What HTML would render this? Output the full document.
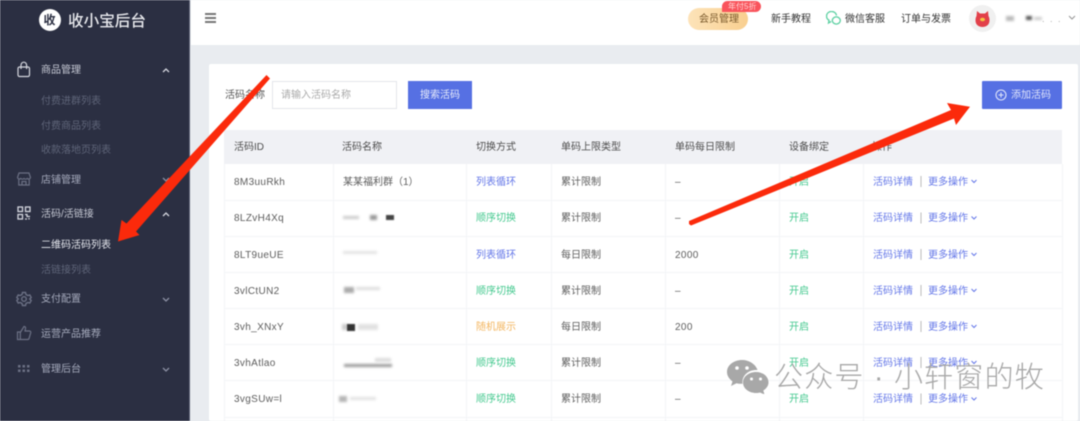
<!DOCTYPE html>
<html lang="zh"><head><meta charset="utf-8"><style>
*{box-sizing:border-box}
html,body{margin:0;width:1080px;height:421px;overflow:hidden;background:#e9ecf0}
body{position:relative;font:10px/14px "Liberation Sans","Noto Sans CJK SC",sans-serif;color:#555}
.a,.t,.r,svg{position:absolute}
.t{white-space:nowrap;margin-top:1px}
#blur{position:absolute;inset:0;filter:blur(.5px)}
.nav{color:#a6abbd;font-size:10px;left:41px}
.sub{color:#5f6579;font-size:10px;left:41px}
.hd{color:#333;font-size:10px}
.th{color:#4d4d4d;top:140px}
.b{color:#6477e8;margin-top:1.5px}.g{color:#45c98f;margin-top:1.5px}.o{color:#f3b660;margin-top:1.5px}
.c{color:#5d5d5d;margin-top:1.5px}
.id{letter-spacing:.35px}
.ln{position:absolute;top:164px;height:257px;width:1px;background:#f3f4f7}
.hl{position:absolute;left:224px;width:838px;height:1px;background:#f3f4f7}
.blot{position:absolute;background:#777;filter:blur(1.2px)}
</style></head><body>
<div id="blur">
<div class="a" style="left:0;top:0;width:190px;height:421px;background:#2b2f42;border-right:1px solid #555b70"></div>
<div class="a" style="left:191px;top:0;width:889px;height:45px;background:#fff"></div>
<div class="a" style="left:209px;top:64px;width:869px;height:357px;background:#fff;border-radius:2px"></div>

<div class="a" style="left:38.500px;top:8.500px;width:22px;height:22px;border-radius:50%;background:#fff"></div>
<div class="t" style="left:43.500px;top:11.500px;font-size:12px;font-weight:700;color:#2b2f42">收</div>
<div class="t" style="left:68px;top:9px;font-size:15.6px;line-height:24px;color:#e9eaee;font-weight:500">收小宝后台</div>

<svg style="left:16px;top:61px" width="16" height="18" viewBox="0 0 16 18" fill="none" stroke="#d4d6de" stroke-width="1.2"><rect x="2" y="6" width="11.500" height="9.500" rx="1.500"/><path d="M5 8V4a2.800 2.800 0 0 1 5.600 0v4"/></svg>
<div class="t nav" style="top:63px;color:#c6c9d4">商品管理</div>
<svg style="left:161px;top:67px" width="10" height="7" viewBox="0 0 10 7" fill="none" stroke="#d4d6de" stroke-width="1.3"><path d="M2 5l3-3 3 3"/></svg>
<div class="t sub" style="top:94px">付费进群列表</div>
<div class="t sub" style="top:118.500px">付费商品列表</div>
<div class="t sub" style="top:143px">收款落地页列表</div>

<svg style="left:16px;top:171px" width="16" height="16" viewBox="0 0 16 16" fill="none" stroke="#6b7084" stroke-width="1.2"><path d="M3 2h10l1.500 4.500a2 2 0 0 1-3.300 1 2.300 2.300 0 0 1-3.200 0 2.300 2.300 0 0 1-3.200 0 2 2 0 0 1-3.300-1zM2.800 8v6h10.400V8M6 14v-3.500h4V14"/></svg>
<div class="t nav" style="top:172.500px">店铺管理</div>
<svg style="left:161px;top:176px" width="10" height="7" viewBox="0 0 10 7" fill="none" stroke="#8b90a3" stroke-width="1.3"><path d="M2 2l3 3 3-3"/></svg>

<svg style="left:17px;top:206px" width="14" height="14" viewBox="0 0 14 14" fill="none" stroke="#d4d6de" stroke-width="1.300"><rect x="1" y="1" width="4.500" height="4.500"/><rect x="8.500" y="1" width="4.500" height="4.500"/><rect x="1" y="8.500" width="4.500" height="4.500"/><path d="M8 8.500h2v2h3M8 13h2M12 12v1.500"/></svg>
<div class="t nav" style="top:207px;color:#c6c9d4">活码/活链接</div>
<svg style="left:161px;top:211px" width="10" height="7" viewBox="0 0 10 7" fill="none" stroke="#d4d6de" stroke-width="1.3"><path d="M2 5l3-3 3 3"/></svg>
<div class="t" style="left:41px;top:238px;color:#e6e8ee">二维码活码列表</div>
<div class="t sub" style="top:263px">活链接列表</div>

<svg style="left:16px;top:291px" width="16" height="16" viewBox="0 0 16 16" fill="none" stroke="#6b7084" stroke-width="1.400"><path d="M6.500 1.500h3l.5 2 1.800 1 2-.6 1.400 2.600-1.500 1.500 1.500 1.500-1.400 2.600-2-.6-1.800 1-.5 2h-3l-.5-2-1.800-1-2 .6L.8 9.500 2.300 8 .8 6.500l1.400-2.600 2 .6 1.800-1z"/><circle cx="8" cy="8" r="2.300"/></svg>
<div class="t nav" style="top:292px">支付配置</div>
<svg style="left:161px;top:296px" width="10" height="7" viewBox="0 0 10 7" fill="none" stroke="#8b90a3" stroke-width="1.3"><path d="M2 2l3 3 3-3"/></svg>

<svg style="left:16px;top:325px" width="16" height="16" viewBox="0 0 16 16" fill="none" stroke="#6b7084" stroke-width="1.200"><path d="M1.500 7h2.800v7.500H1.500zM4.300 7.500L8 1.500c1.300 0 1.800 1 1.500 2L9 6h4.500c1 0 1.500.8 1.200 1.800l-1.600 5.500c-.2.800-.8 1.200-1.500 1.200H4.300"/></svg>
<div class="t nav" style="top:326.500px">运营产品推荐</div>

<svg style="left:18px;top:365px" width="12" height="10" viewBox="0 0 12 10" fill="#6b7084"><rect x="0" y="0" width="2.500" height="2.500"/><rect x="4.500" y="0" width="2.500" height="2.500"/><rect x="9" y="0" width="2.500" height="2.500"/><rect x="0" y="4.500" width="2.500" height="2.500"/><rect x="4.500" y="4.500" width="2.500" height="2.500"/><rect x="9" y="4.500" width="2.500" height="2.500"/></svg>
<div class="t nav" style="top:362px">管理后台</div>
<svg style="left:161px;top:366px" width="10" height="7" viewBox="0 0 10 7" fill="none" stroke="#8b90a3" stroke-width="1.3"><path d="M2 2l3 3 3-3"/></svg>

<div class="a" style="left:205px;top:13px;width:11px;height:2px;background:#777;box-shadow:0 4px 0 #777,0 8px 0 #777"></div>

<div class="a" style="left:688px;top:8px;width:60px;height:22px;border-radius:11px;background:linear-gradient(90deg,#fde3b9,#f9cf8f)"></div>
<div class="t" style="left:699px;top:12px;color:#7a5a2c">会员管理</div>
<div class="a" style="left:722px;top:1px;width:39px;height:11px;border-radius:6px 6px 6px 0;background:#f9545c"></div>
<div class="t" style="left:728px;top:0;font-size:8px;line-height:11px;color:#ffd5d5">年付5折</div>
<div class="t hd" style="left:771px;top:12px">新手教程</div>
<svg style="left:826px;top:11px" width="16" height="15" viewBox="0 0 16 15" fill="none" stroke="#5cd0a2" stroke-width="1.300"><path d="M10.500 4.500A5 4.700 0 1 0 3 9.200L2.500 12l2.600-1.500"/><ellipse cx="10.300" cy="9.500" rx="4" ry="3.600"/></svg>
<div class="t hd" style="left:845px;top:12px">微信客服</div>
<div class="t hd" style="left:901px;top:12px">订单与发票</div>
<div class="a" style="left:969px;top:5px;width:27px;height:27px;border-radius:50%;background:#f0f0f0"></div>
<svg style="left:974px;top:10px" width="17" height="18" viewBox="0 0 17 18" fill="#e2404a"><path d="M3 1l3 2.500h5L14 1l.5 5c1 1.500 1 3.500 1 4.500 0 4-3 6.500-7 6.500s-7-2.500-7-6.500c0-1 0-3 1-4.500z"/><ellipse cx="8.500" cy="9.500" rx="2.500" ry="1.800" fill="#f5c542"/></svg>
<div class="blot" style="left:1006px;top:16px;width:8px;height:5px;background:#bbb"></div>
<div class="blot" style="left:1026px;top:16px;width:6px;height:4px;background:#555"></div>
<div class="blot" style="left:1034px;top:17px;width:8px;height:3px;background:#ccc"></div>
<div class="t" style="left:1042px;top:11px;color:#aaa;letter-spacing:1.500px;font-size:9px">. . .</div>
<svg style="left:1067px;top:14px" width="10" height="7" viewBox="0 0 10 7" fill="none" stroke="#999" stroke-width="1.100"><path d="M2 2l3 3 3-3"/></svg>

<div class="t" style="left:225px;top:88px;color:#555">活码名称</div>
<div class="a" style="left:272px;top:81px;width:125px;height:28px;border:1px solid #e3e5ea;background:#fff"></div>
<div class="t" style="left:281px;top:88px;color:#aaa">请输入活码名称</div>
<div class="a" style="left:408px;top:81px;width:64px;height:28px;background:#5670e3"></div>
<div class="t" style="left:420px;top:88px;color:#e8ecfb">搜索活码</div>
<div class="a" style="left:982px;top:81px;width:80px;height:28px;border-radius:1px;background:#5670e3"></div>
<svg style="left:994px;top:88px" width="14" height="14" viewBox="0 0 14 14" fill="none" stroke="#dfe4fa" stroke-width="1.100"><circle cx="7" cy="7" r="5"/><path d="M7 4.500v5M4.500 7h5"/></svg>
<div class="t" style="left:1011px;top:88px;color:#dfe4fa">添加活码</div>

<div class="a" style="left:224px;top:130px;width:838px;height:34px;background:#f0f1f5"></div>
<div class="t th" style="left:234px">活码ID</div>
<div class="t th" style="left:342px">活码名称</div>
<div class="t th" style="left:476px">切换方式</div>
<div class="t th" style="left:561px">单码上限类型</div>
<div class="t th" style="left:675px">单码每日限制</div>
<div class="t th" style="left:789px">设备绑定</div>
<div class="t th" style="left:872px">操作</div>

<i class="ln" style="left:224px"></i><i class="ln" style="left:333px"></i><i class="ln" style="left:466px"></i><i class="ln" style="left:551px"></i><i class="ln" style="left:665px"></i><i class="ln" style="left:779px"></i><i class="ln" style="left:863px"></i><i class="ln" style="left:1062px"></i>
<i class="hl" style="top:200px"></i><i class="hl" style="top:236px"></i><i class="hl" style="top:272px"></i><i class="hl" style="top:308px"></i><i class="hl" style="top:344px"></i><i class="hl" style="top:380px"></i><i class="hl" style="top:417px"></i>

<div class="t c id" style="left:234px;top:174px">8M3uuRkh</div><div class="t c" style="left:343px;top:174px">某某福利群（1）</div><div class="t b" style="left:476px;top:174px">列表循环</div><div class="t c" style="left:561px;top:174px">累计限制</div><div class="t c" style="left:675px;top:174px">–</div><div class="t g" style="left:789px;top:174px">开启</div>
<div class="t c id" style="left:234px;top:210.500px">8LZvH4Xq</div><div class="t g" style="left:476px;top:210.500px">顺序切换</div><div class="t c" style="left:561px;top:210.500px">累计限制</div><div class="t c" style="left:675px;top:210.500px">–</div><div class="t g" style="left:789px;top:210.500px">开启</div>
<div class="t c id" style="left:234px;top:247px">8LT9ueUE</div><div class="t b" style="left:476px;top:247px">列表循环</div><div class="t c" style="left:561px;top:247px">每日限制</div><div class="t c id" style="left:675px;top:247px">2000</div><div class="t g" style="left:789px;top:247px">开启</div>
<div class="t c id" style="left:234px;top:283px">3vlCtUN2</div><div class="t g" style="left:476px;top:283px">顺序切换</div><div class="t c" style="left:561px;top:283px">累计限制</div><div class="t c" style="left:675px;top:283px">–</div><div class="t g" style="left:789px;top:283px">开启</div>
<div class="t c id" style="left:234px;top:319px">3vh_XNxY</div><div class="t o" style="left:476px;top:319px">随机展示</div><div class="t c" style="left:561px;top:319px">每日限制</div><div class="t c id" style="left:675px;top:319px">200</div><div class="t g" style="left:789px;top:319px">开启</div>
<div class="t c id" style="left:234px;top:355px">3vhAtlao</div><div class="t g" style="left:476px;top:355px">顺序切换</div><div class="t c" style="left:561px;top:355px">累计限制</div><div class="t c" style="left:675px;top:355px">–</div><div class="t g" style="left:789px;top:355px">开启</div>
<div class="t c id" style="left:234px;top:391.500px">3vgSUw=l</div><div class="t g" style="left:476px;top:391.500px">顺序切换</div><div class="t c" style="left:561px;top:391.500px">累计限制</div><div class="t c" style="left:675px;top:391.500px">–</div><div class="t g" style="left:789px;top:391.500px">开启</div>

<div class="t b" style="left:873px;top:174px">活码详情</div><div class="t b" style="left:928px;top:174px">更多操作</div>
<div class="t b" style="left:873px;top:210.500px">活码详情</div><div class="t b" style="left:928px;top:210.500px">更多操作</div>
<div class="t b" style="left:873px;top:247px">活码详情</div><div class="t b" style="left:928px;top:247px">更多操作</div>
<div class="t b" style="left:873px;top:283px">活码详情</div><div class="t b" style="left:928px;top:283px">更多操作</div>
<div class="t b" style="left:873px;top:319px">活码详情</div><div class="t b" style="left:928px;top:319px">更多操作</div>
<div class="t b" style="left:873px;top:355px">活码详情</div><div class="t b" style="left:928px;top:355px">更多操作</div>
<div class="t b" style="left:873px;top:391.500px">活码详情</div><div class="t b" style="left:928px;top:391.500px">更多操作</div>
<svg style="left:920px;top:170px" width="60" height="240" viewBox="0 0 60 240" fill="none" stroke="#6477e8" stroke-width="1"><path d="M51.500 10l2.500 2.500 2.500-2.500M51.500 46.500l2.500 2.500 2.500-2.500M51.500 83l2.500 2.500 2.500-2.500M51.500 119l2.500 2.500 2.500-2.500M51.500 155l2.500 2.500 2.500-2.500M51.500 191l2.500 2.500 2.500-2.500M51.500 227.500l2.500 2.500 2.500-2.500"/><path stroke="#bbb" d="M1 6v11M1 42.500v11M1 79v11M1 115v11M1 151v11M1 187v11M1 223.500v11"/></svg>

<div class="blot" style="left:343px;top:216px;width:16px;height:3px;background:#ccc"></div>
<div class="blot" style="left:370px;top:215px;width:7px;height:5px;background:#999"></div>
<div class="a" style="left:386px;top:215px;width:8px;height:5px;background:#444;filter:blur(.6px)"></div>
<div class="blot" style="left:343px;top:251px;width:34px;height:3px;background:#e4e4e4"></div>
<div class="blot" style="left:344px;top:287px;width:10px;height:6px;background:#aaa"></div>
<div class="blot" style="left:356px;top:287px;width:24px;height:3px;background:#ddd"></div>
<div class="blot" style="left:342px;top:324px;width:6px;height:6px;background:#ccc"></div>
<div class="a" style="left:347px;top:324px;width:8px;height:7px;background:#333;filter:blur(.6px)"></div>
<div class="blot" style="left:358px;top:324px;width:20px;height:6px;background:#e2e2e2"></div>
<div class="blot" style="left:344px;top:364px;width:48px;height:3px;background:#999"></div>
<div class="blot" style="left:375px;top:358px;width:16px;height:4px;background:#ddd"></div>
<div class="blot" style="left:339px;top:396px;width:8px;height:6px;background:#b5b5b5"></div>
<div class="blot" style="left:350px;top:397px;width:26px;height:3px;background:#e2e2e2"></div>

<svg style="left:727px;top:360px" width="42" height="34" viewBox="0 0 42 34" fill="#a8a8a8"><path d="M15 0C7 0 0 5 0 12c0 4 2.500 7 5.500 9.500L4 26l5.500-2.800c1.500.4 3 .6 5 .6h1C14.500 16 21 10 29 10h1.500C28.500 4 22 0 15 0z"/><path d="M29 12c-7 0-13 4.500-13 10.500S22 33 29 33c1.500 0 3-.2 4-.5l4.500 2-1.200-4c3.200-2 5.200-5 5.200-8C41.500 16.500 36 12 29 12z"/><g fill="#fff"><circle cx="10" cy="8" r="1.800"/><circle cx="20" cy="8" r="1.800"/><circle cx="24.500" cy="19" r="1.500"/><circle cx="33.500" cy="19" r="1.500"/></g></svg>
<div class="t" style="left:774px;top:359px;font-size:29px;line-height:36px;letter-spacing:1.2px;color:#a8a8a8;font-weight:300">公众号 · 小轩窗的牧</div>

<svg style="left:0;top:0" width="1080" height="421"><polygon fill="#fb2a0b" points="266.500,75 270,78.500 136,231.500 139.500,235 118,241.500 121.500,220 126.500,223.500"/><polygon fill="#fb2a0b" points="689,221 951,110 947,103 970,106.700 956,125 954,118.500 691,225.500 689,224"/></svg>
</div>
</body></html>
